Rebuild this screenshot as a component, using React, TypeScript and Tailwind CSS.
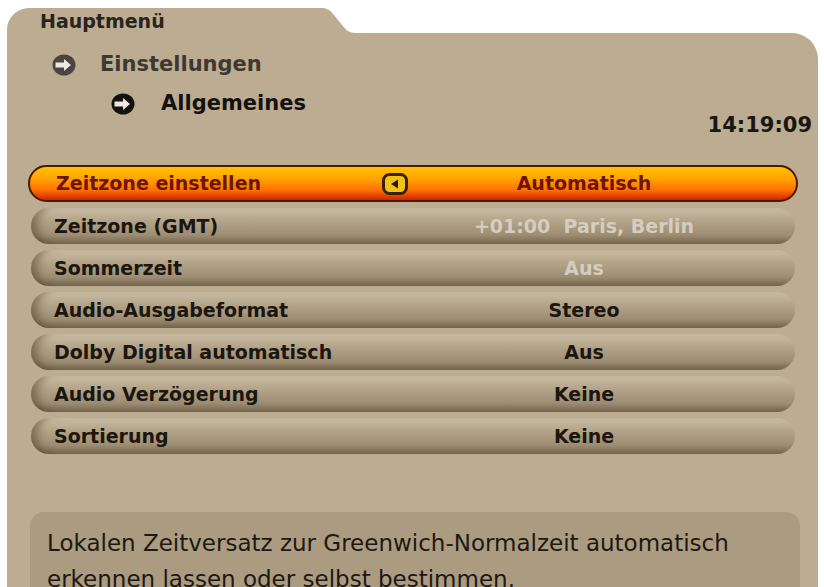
import React from 'react';

const font = { fontFamily: '"DejaVu Sans", "Liberation Sans", sans-serif' };

type Row = { label: string; value: string; disabled?: boolean; selected?: boolean };

const rows: Row[] = [
  { label: 'Zeitzone einstellen', value: 'Automatisch', selected: true },
  { label: 'Zeitzone (GMT)', value: '+01:00  Paris, Berlin', disabled: true },
  { label: 'Sommerzeit', value: 'Aus', disabled: true },
  { label: 'Audio-Ausgabeformat', value: 'Stereo' },
  { label: 'Dolby Digital automatisch', value: 'Aus' },
  { label: 'Audio Verzögerung', value: 'Keine' },
  { label: 'Sortierung', value: 'Keine' },
];

function CrumbIcon({ dark }: { dark?: boolean }) {
  const fill = dark ? '#141210' : '#4a4540';
  return (
    <svg width="24" height="22" viewBox="0 0 24 22">
      <ellipse cx="12" cy="11" rx="11.5" ry="10.5" fill={fill} />
      <path d="M3.5 8.5 H12 V5 L19 11 L12 17 V13.5 H3.5 Z" fill="#eee8de" />
    </svg>
  );
}

function LeftArrowBox() {
  return (
    <svg width="26" height="22" viewBox="0 0 26 22">
      <rect x="1.5" y="1.5" width="23" height="19" rx="6" fill="#f3c21a" stroke="#3a2200" strokeWidth="3" />
      <path d="M9 11 L16 6.5 V15.5 Z" fill="#2a1a00" />
    </svg>
  );
}

function MenuRow({ row }: { row: Row }) {
  const base = row.selected
    ? 'h-[37px] border-2 border-[#4a1a00] bg-[linear-gradient(to_bottom,#ffc400_0%,#ffa000_38%,#ff7000_70%,#cf2500_100%)] text-[#6e1400]'
    : 'h-[36px] mx-[3px] bg-[linear-gradient(to_bottom,#cbbda4_0%,#b3a48a_35%,#9d8d73_75%,#74654d_100%)] shadow-[inset_12px_0_10px_-6px_rgba(60,45,25,0.45)] text-[#1c160e]';
  const valueColor = row.disabled ? 'text-[#d6cdbf]' : '';
  return (
    <div className={`rounded-full grid grid-cols-[342px_1fr] items-center ${base}`}>
      <div className={`text-[19px] font-bold ${row.selected ? 'pl-[26px]' : 'pl-[23px]'}`}>{row.label}</div>
      <div className="grid grid-cols-[46px_1fr_46px] items-center">
        <div className="flex justify-center">{row.selected && <LeftArrowBox />}</div>
        <div className={`text-center text-[19px] font-bold whitespace-pre ${valueColor}`}>{row.value}</div>
        <div />
      </div>
    </div>
  );
}

export default function App() {
  return (
    <div className="min-h-screen bg-white pl-[7px] pr-[6px] pt-[8px] overflow-hidden" style={font}>
      <div className="flex h-[25px]">
        <div className="w-[311px] bg-[#bcac91] rounded-tl-[22px] pl-[33px] pt-[2px] text-[19px] font-bold leading-[22px] text-[#2a241c]">
          Hauptmenü
        </div>
        <svg width="38" height="25" viewBox="0 0 38 25" className="block">
          <path d="M0 0 H4 C9 0 12 2 16 7 L24 17 C28 22 31 25 38 25 H0 Z" fill="#bcac91" />
        </svg>
      </div>
      <div className="bg-[#bcac91] rounded-tr-[26px] h-[554px] flex flex-col">
        <div className="flex justify-between items-end">
          <div className="flex flex-col">
            <div className="flex items-center h-[24px] mt-[20px] pl-[45px] gap-[24px]">
              <CrumbIcon />
              <span className="text-[21px] font-semibold text-[#3e3830]">Einstellungen</span>
            </div>
            <div className="flex items-center h-[26px] mt-[14px] pl-[104px] gap-[26px]">
              <CrumbIcon dark />
              <span className="text-[21px] font-bold text-[#141210]">Allgemeines</span>
            </div>
          </div>
          <div className="pr-[6px] mb-[-24px] text-[21px] font-bold text-[#1a1612]">14:19:09</div>
        </div>
        <div className="flex flex-col gap-[6px] mt-[48px] ml-[21px] mr-[20px]">
          {rows.map((r) => (
            <MenuRow key={r.label} row={r} />
          ))}
        </div>
        <div className="mt-[58px] ml-[23px] mr-[18px] flex-1 bg-[#ab9b81] rounded-t-[14px] pl-[17px] pt-[13px] text-[23px] leading-[36px] text-[#1e1810] whitespace-nowrap">
          <p>Lokalen Zeitversatz zur Greenwich-Normalzeit automatisch</p>
          <p>erkennen lassen oder selbst bestimmen.</p>
        </div>
      </div>
    </div>
  );
}
